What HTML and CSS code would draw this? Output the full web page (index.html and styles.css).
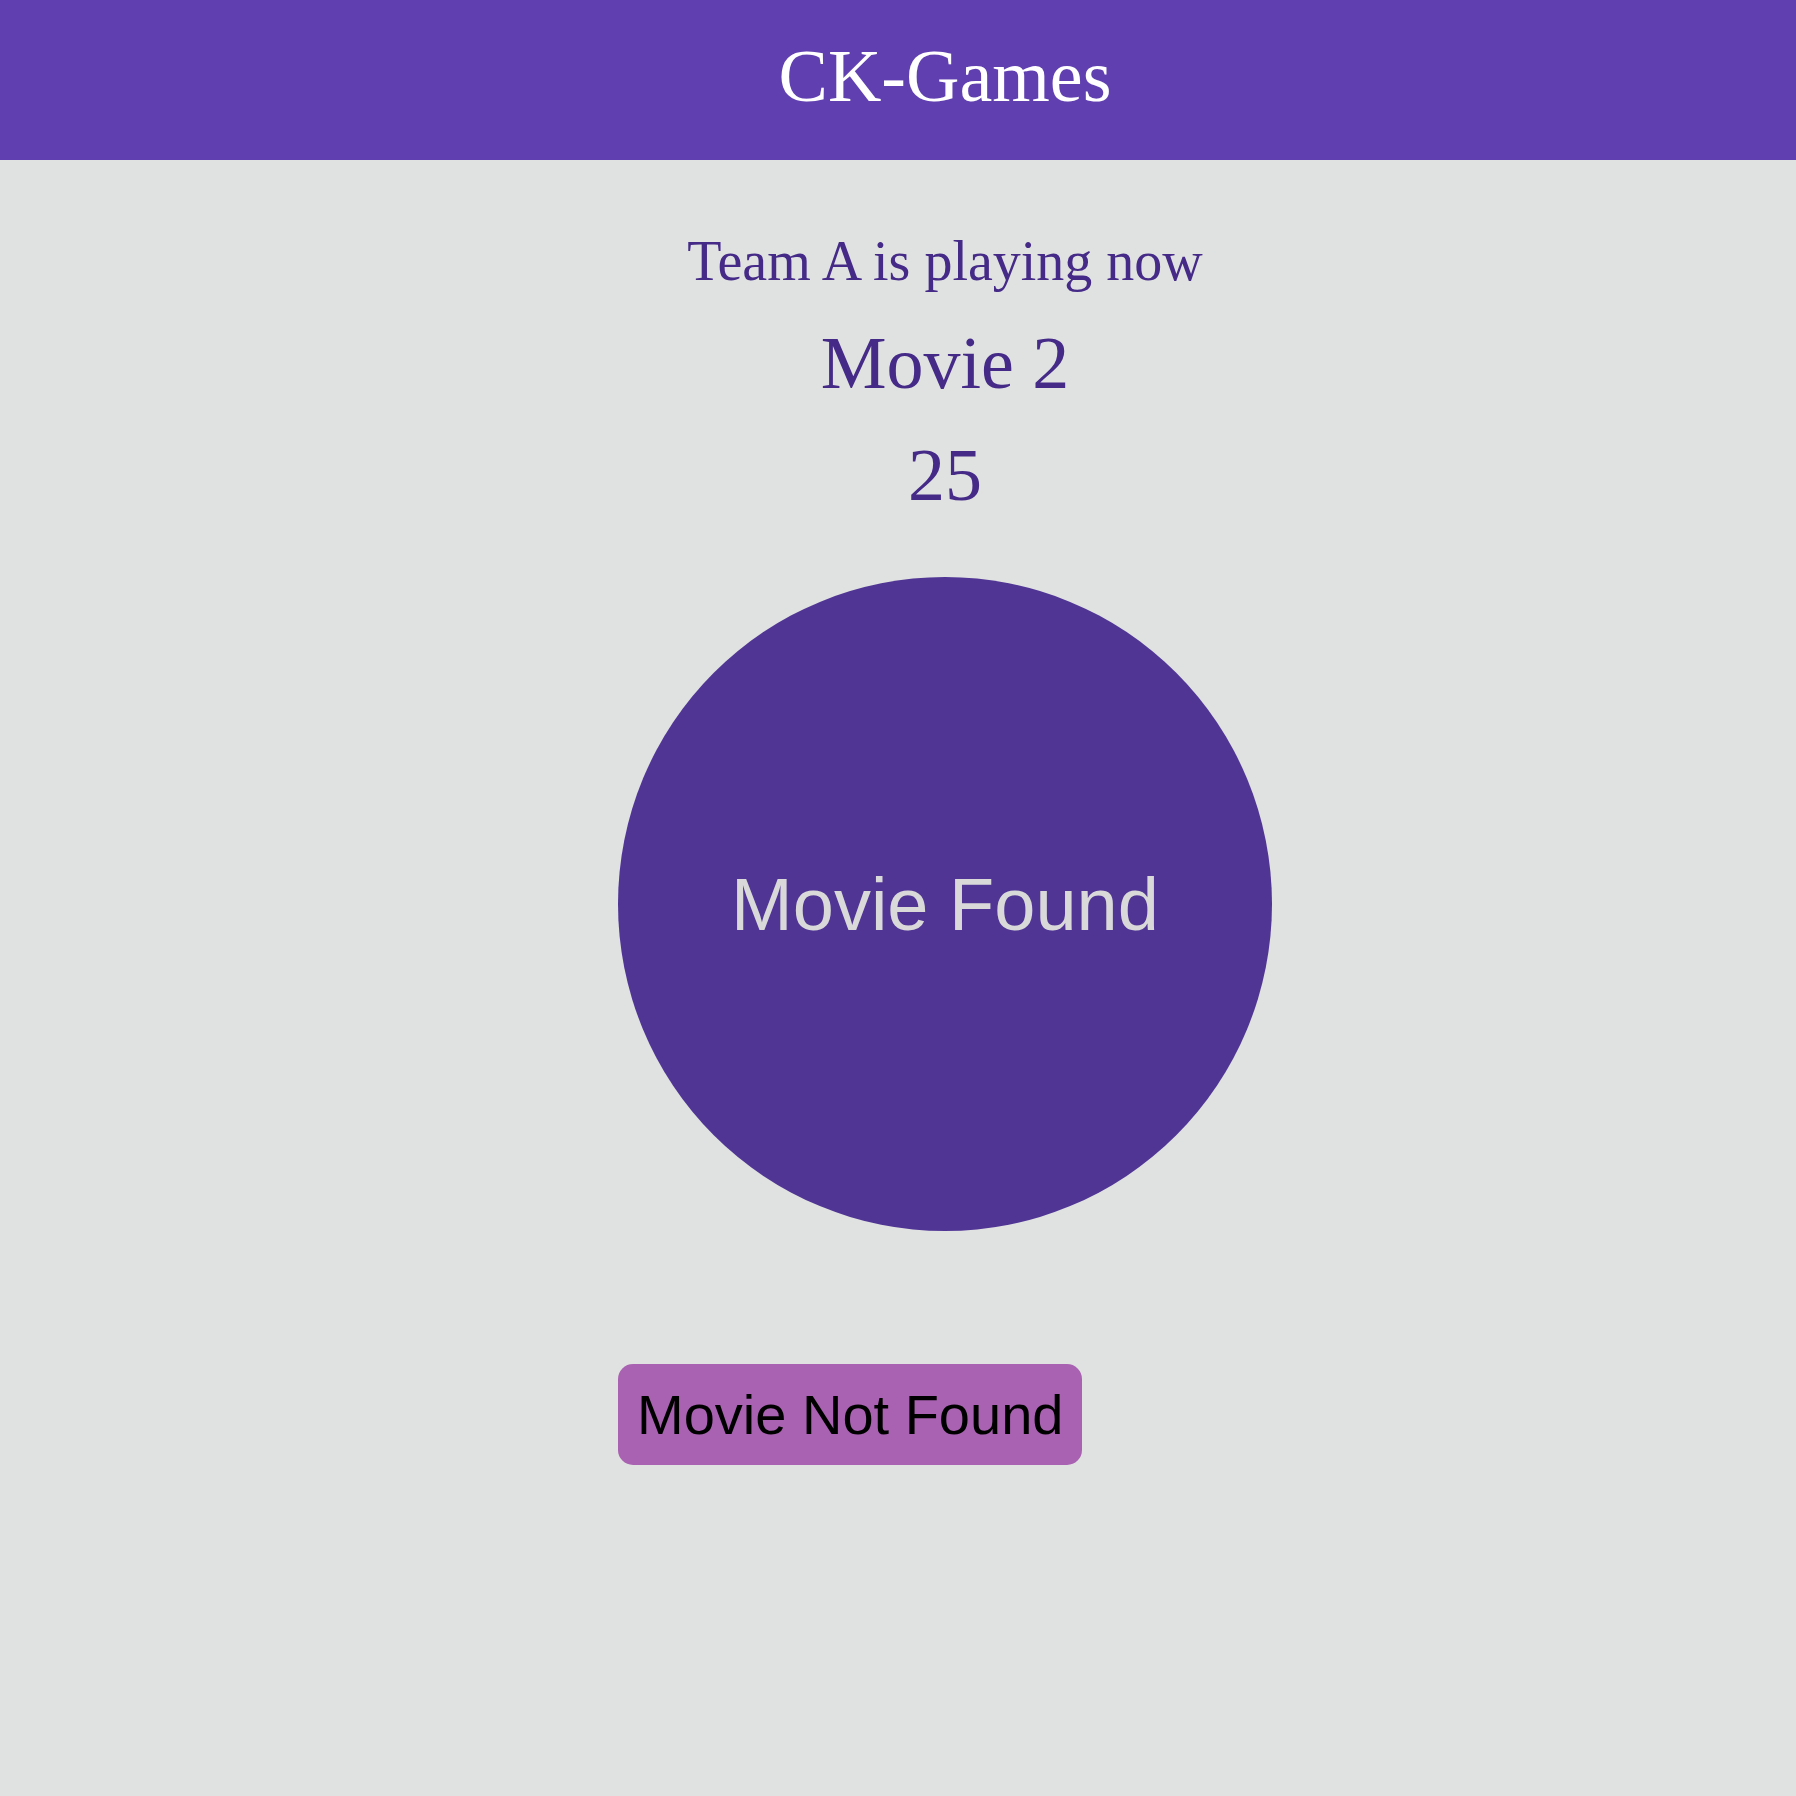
FILE: index.html
```html
<!DOCTYPE html>
<html lang="en">
<head>
<meta charset="utf-8">
<title>CK-Games</title>
<link rel="stylesheet" href="styles.css">
</head>
<body>
<header class="topbar">
  <h1 class="brand">CK-Games</h1>
</header>
<main class="game">
  <h2 class="turn">Team A is playing now</h2>
  <h2 class="movie">Movie 2</h2>
  <div class="timer">25</div>
  <div class="stage">
    <button class="found" type="button">Movie Found</button>
    <button class="not-found" type="button">Movie Not Found</button>
  </div>
</main>
</body>
</html>
```
FILE: styles.css
```css
html, body {
  margin: 0;
  padding: 0;
}

body {
  background: #e0e2e1;
  font-family: "Liberation Serif", "Times New Roman", serif;
  min-height: 1796px;
}

.topbar {
  box-sizing: border-box;
  height: 160px;
  background: #603fb0;
  padding: 34px 0 0 94px;
  display: flex;
  justify-content: center;
}

.brand {
  margin: 0;
  font-size: 74px;
  font-weight: normal;
  line-height: normal;
  color: #ffffff;
}

.game {
  padding: 69px 0 0 94px;
  display: flex;
  flex-direction: column;
  align-items: center;
  color: #452a88;
}

.turn {
  margin: 0;
  font-size: 56px;
  font-weight: normal;
  line-height: normal;
}

.movie {
  margin: 28px 0 0;
  font-size: 74px;
  font-weight: normal;
  line-height: normal;
}

.timer {
  margin-top: 27px;
  font-size: 74px;
  line-height: normal;
}

.stage {
  width: 654px;
  margin-top: 59px;
  display: flex;
  flex-direction: column;
  align-items: flex-start;
}

.found {
  width: 654px;
  height: 654px;
  border: none;
  border-radius: 50%;
  background: #503595;
  color: #d9d9d9;
  font-family: "Liberation Sans", Arial, sans-serif;
  font-size: 74px;
  padding: 0;
  display: flex;
  align-items: center;
  justify-content: center;
}

.not-found {
  margin-top: 133px;
  border: none;
  border-radius: 15px;
  background: #a962b1;
  color: #000000;
  font-family: "Liberation Sans", Arial, sans-serif;
  font-size: 56px;
  line-height: normal;
  padding: 18px 19px;
}
```
